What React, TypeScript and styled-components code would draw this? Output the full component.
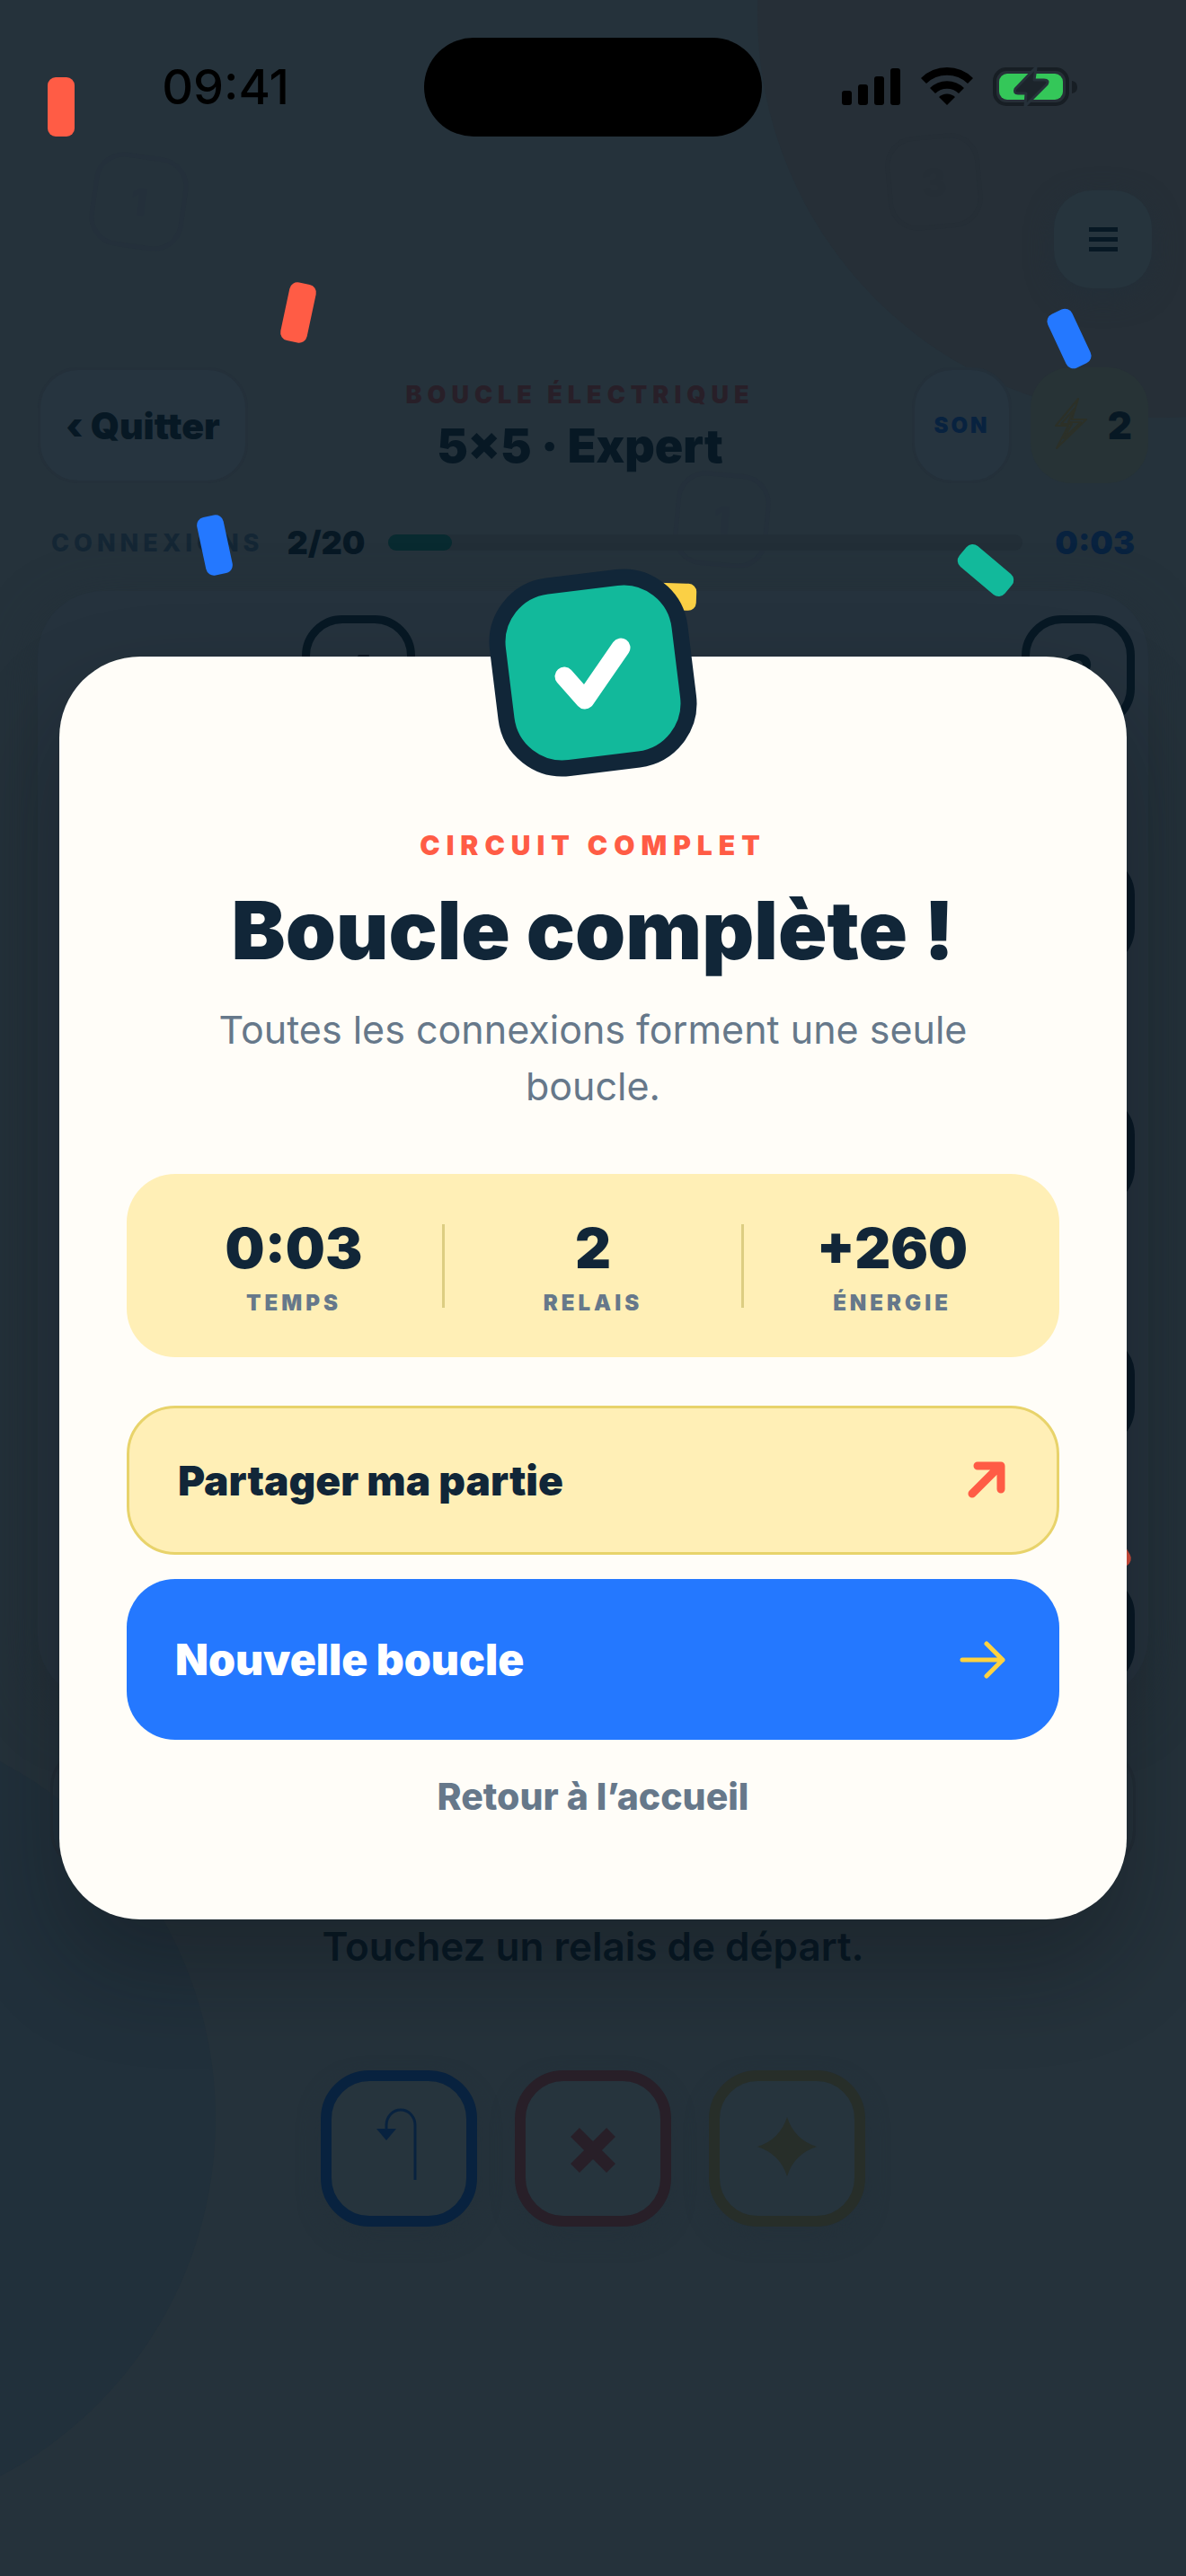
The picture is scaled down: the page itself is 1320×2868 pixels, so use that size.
import React from "react";
import styled, { createGlobalStyle } from "styled-components";

const GlobalStyle = createGlobalStyle`
  *, *::before, *::after { box-sizing: border-box; }
  body { margin: 0; background: #25323b; }
  h1, h2, p, dl, dt, dd { margin: 0; }
  button { font: inherit; border: 0; background: none; padding: 0; cursor: pointer; }
  a { text-decoration: none; }
`;

const Page = styled.div`
  position: relative;
  min-height: 100vh;
  overflow: hidden;
  background: #25323b;
  color: #071824;
  font-family: Inter, "Liberation Sans", sans-serif;
`;

const Glow = styled.div<{ $tone: string }>`
  position: absolute;
  width: 900px;
  height: 900px;
  border-radius: 50%;
  background: ${(p) => p.$tone};
`;
const TopGlow = styled(Glow)`
  top: -435px;
  right: -423px;
`;
const BottomGlow = styled(Glow)`
  bottom: 59px;
  left: -660px;
`;

const GhostTile = styled.div<{ $x: number; $y: number; $turn: number; $tone: string }>`
  position: absolute;
  left: ${(p) => p.$x}px;
  top: ${(p) => p.$y}px;
  width: 105px;
  height: 105px;
  display: grid;
  place-items: center;
  border: 5px solid ${(p) => p.$tone};
  border-radius: 33px;
  color: ${(p) => p.$tone};
  font-size: 42px;
  font-weight: 800;
  transform: rotate(${(p) => p.$turn}deg);
`;

const StatusBar = styled.div`
  position: relative;
  display: grid;
  grid-template-columns: 1fr 376px 1fr;
  align-items: center;
  justify-items: center;
  padding: 42px 30px 0;
  color: #000;
`;
const Clock = styled.span`
  font-size: 54px;
  font-weight: 500;
  line-height: 66px;
`;
const Island = styled.div`
  width: 100%;
  height: 110px;
  border-radius: 55px;
  background: #000;
`;
const StatusIcons = styled.svg`
  width: 264px;
  height: 48px;
`;

const Game = styled.main`
  position: relative;
  display: flex;
  flex-direction: column;
`;
const MenuRow = styled.div`
  display: flex;
  justify-content: flex-end;
  padding: 60px 38px 0;
`;
const MenuButton = styled.button`
  display: grid;
  place-items: center;
  width: 109px;
  height: 109px;
  border-radius: 42px;
  background: #26343d;
  box-shadow: 0 9px 30px #232f39;
`;

const Header = styled.header`
  display: flex;
  align-items: center;
  gap: 21px;
  padding: 88px 42px 0;
`;
const Tile = styled.button<{ $width: number }>`
  width: ${(p) => p.$width}px;
  height: 129px;
  border: 3px solid #24303a;
  border-radius: 45px;
  background: #26343f;
`;
const QuitButton = styled(Tile)`
  color: #071824;
  font-size: 41px;
  font-weight: 900;
`;
const SoundButton = styled(Tile)`
  color: #08223f;
  font-size: 24px;
  font-weight: 900;
  letter-spacing: 3px;
`;
const Energy = styled.div`
  display: flex;
  align-items: center;
  justify-content: space-between;
  width: 131px;
  height: 129px;
  padding: 0 18px 0 24px;
  border-radius: 45px;
  background: #273336;
  font-size: 42px;
  font-weight: 900;
`;
const Heading = styled.div`
  flex: 1;
  margin: 0 -21px;
  padding-top: 3px;
  text-align: center;
`;
const Kicker = styled.p`
  color: #281f28;
  font-size: 27px;
  line-height: 33px;
  font-weight: 900;
  letter-spacing: 6px;
`;
const Level = styled.h1`
  margin-top: 9px;
  font-size: 52px;
  line-height: 63px;
  font-weight: 900;
`;

const Progress = styled.div`
  display: flex;
  align-items: center;
  margin-top: 42px;
  padding: 0 57px;
  height: 48px;
  font-size: 36px;
  font-weight: 900;
`;
const ProgressLabel = styled.span`
  color: #142634;
  font-size: 27px;
  font-weight: 800;
  letter-spacing: 5px;
`;
const ProgressCount = styled.span`
  margin: 0 26px;
`;
const Track = styled.div`
  flex: 1;
  height: 18px;
  border-radius: 9px;
  background: #222e37;
`;
const Fill = styled.div`
  width: 10%;
  height: 100%;
  border-radius: 9px;
  background: #082a30;
`;
const Timer = styled.span`
  margin-left: 36px;
  color: #08223f;
`;

const Board = styled.section`
  display: grid;
  grid-template-columns: repeat(5, 126px);
  grid-auto-rows: 126px;
  justify-content: space-between;
  align-content: space-between;
  margin: 30px 42px 0;
  padding: 27px 15px 15px 27px;
  aspect-ratio: 1;
  border-radius: 72px;
  background: #25323d;
  box-shadow: 0 18px 60px #232f38;
`;
const Relay = styled.div<{ $col: number; $row: number }>`
  grid-column: ${(p) => p.$col};
  grid-row: ${(p) => p.$row};
  display: grid;
  place-items: center;
  border: 9px solid #071824;
  border-radius: 45px;
  font-size: 54px;
  font-weight: 800;
`;
const EmptyCard = styled.div`
  height: 138px;
  margin: 51px 56px 0;
  border: 3px solid #222d36;
  border-radius: 45px;
`;
const Hint = styled.p`
  margin-top: 57px;
  text-align: center;
  font-size: 44px;
  line-height: 54px;
  font-weight: 600;
`;
const Tools = styled.div`
  display: flex;
  justify-content: center;
  gap: 42px;
  margin-top: 111px;
`;
const ToolButton = styled.button<{ $tone: string }>`
  display: grid;
  place-items: center;
  width: 174px;
  height: 174px;
  border: 12px solid ${(p) => p.$tone};
  border-radius: 54px;
  background: #26343d;
  color: ${(p) => p.$tone};
  box-shadow: 0 12px 24px #24313a;
`;

const Overlay = styled.div`
  position: absolute;
  inset: 0;
  display: flex;
  align-items: center;
  padding: 0 66px;
`;
const Confetto = styled.i<{ $x: number; $y: number; $turn: number; $tone: string }>`
  position: absolute;
  left: ${(p) => p.$x}px;
  top: ${(p) => p.$y}px;
  width: 30px;
  height: 66px;
  border-radius: 9px;
  background: ${(p) => p.$tone};
  transform: rotate(${(p) => p.$turn}deg);
`;
const Dialog = styled.section`
  position: relative;
  flex: 1;
  display: flex;
  flex-direction: column;
  padding: 192px 75px 86px;
  border-radius: 90px;
  background: #fffdf8;
  color: #112638;
  text-align: center;
  box-shadow: 0 54px 108px rgba(10, 14, 16, 0.3);
`;
const Badge = styled.div`
  position: absolute;
  top: -93px;
  left: 50%;
  width: 222px;
  height: 222px;
  margin-left: -111px;
  display: grid;
  place-items: center;
  border: 18px solid #112638;
  border-radius: 72px;
  background: #12b99b;
  transform: rotate(-7deg);
`;
const CheckMark = styled.svg`
  transform: rotate(7deg);
`;
const Eyebrow = styled.p`
  color: #ff5c45;
  font-size: 30px;
  line-height: 36px;
  font-weight: 900;
  letter-spacing: 7px;
`;
const Title = styled.h2`
  margin-top: 24px;
  font-size: 90px;
  line-height: 105px;
  font-weight: 900;
`;
const Message = styled.p`
  margin: 27px 84px 0;
  color: #66788a;
  font-size: 43px;
  line-height: 63px;
`;
const Stats = styled.dl`
  display: flex;
  align-items: center;
  margin-top: 66px;
  padding: 45px 21px;
  border-radius: 54px;
  background: #ffefb6;
`;
const Stat = styled.div`
  flex: 1;
  display: flex;
  flex-direction: column-reverse;
`;
const StatLabel = styled.dt`
  margin-top: 9px;
  color: #66788a;
  font-size: 24px;
  line-height: 30px;
  font-weight: 900;
  letter-spacing: 4px;
`;
const StatValue = styled.dd`
  font-size: 62px;
  line-height: 75px;
  font-weight: 900;
`;
const Divider = styled.div`
  width: 3px;
  height: 93px;
  background: #dccd82;
`;
const ActionButton = styled.button`
  display: flex;
  align-items: center;
  justify-content: space-between;
  border-radius: 54px;
  font-weight: 900;
`;
const ShareButton = styled(ActionButton)`
  height: 166px;
  margin-top: 54px;
  padding: 0 57px 0 54px;
  border: 3px solid #e8d36b;
  background: #ffefb6;
  color: #112638;
  font-size: 46px;
`;
const PrimaryButton = styled(ActionButton)`
  height: 179px;
  margin-top: 27px;
  padding: 0 60px 0 54px;
  background: #2478ff;
  color: #fff;
  font-size: 48px;
`;
const HomeLink = styled.a`
  align-self: center;
  margin-top: 12px;
  color: #66788a;
  font-size: 41px;
  line-height: 102px;
  font-weight: 800;
`;

const confetti = [
  { x: 53, y: 86, turn: 0, tone: "#ff5c45" },
  { x: 317, y: 315, turn: 12, tone: "#ff5c45" },
  { x: 1175, y: 344, turn: -25, tone: "#2478ff" },
  { x: 224, y: 574, turn: -12, tone: "#2478ff" },
  { x: 1082, y: 602, turn: -50, tone: "#12b99b" },
  { x: 727, y: 631, turn: 92, tone: "#fbd045" },
  { x: 1211, y: 1709, turn: 60, tone: "#d94f3d" },
];

const relays = [
  { col: 2, row: 1, value: "4" },
  { col: 5, row: 1, value: "2" },
  { col: 5, row: 2, value: "" },
  { col: 5, row: 3, value: "" },
  { col: 5, row: 4, value: "" },
  { col: 5, row: 5, value: "" },
];

const stats = [
  { label: "TEMPS", value: "0:03" },
  { label: "RELAIS", value: "2" },
  { label: "ÉNERGIE", value: "+260" },
];

export default function App() {
  return (
    <Page>
      <GlobalStyle />
      <TopGlow $tone="#262f37" />
      <BottomGlow $tone="#21303b" />
      <GhostTile aria-hidden $x={102} $y={172} $turn={8} $tone="#24303b">1</GhostTile>
      <GhostTile aria-hidden $x={987} $y={150} $turn={-5} $tone="#252e36">3</GhostTile>
      <GhostTile aria-hidden $x={751} $y={526} $turn={5} $tone="#24303b">1</GhostTile>

      <StatusBar>
        <Clock>09:41</Clock>
        <Island />
        <StatusIcons viewBox="0 0 264 48" aria-hidden>
          <g fill="#000">
            <rect x="0" y="28" width="11" height="16" rx="3" />
            <rect x="18" y="21" width="11" height="23" rx="3" />
            <rect x="36" y="12" width="11" height="32" rx="3" />
            <rect x="54" y="3" width="11" height="41" rx="3" />
            <path d="M88 14 A41 41 0 0 1 146 14 L140 20 A33 33 0 0 0 94 20 Z" />
            <path d="M98 25 A27 27 0 0 1 136 25 L130 31 A19 19 0 0 0 104 31 Z" />
            <path d="M108 35 A13 13 0 0 1 126 35 L117 44 Z" />
          </g>
          <rect x="170" y="4" width="81" height="39" rx="13" fill="none" stroke="#171e24" strokeWidth="4" />
          <path d="M256 17 Q262 18 262 24 Q262 30 256 31 Z" fill="#171e24" />
          <rect x="175" y="9" width="71" height="29" rx="9" fill="#34c759" />
          <path
            d="M216 2 L193 26 Q191 31 196 31 L205 31 L204 45 L228 21 Q231 16 225 16 L214 16 Z"
            fill="#1c242b"
            stroke="#26313a"
            strokeWidth="3"
            strokeLinejoin="round"
          />
        </StatusIcons>
      </StatusBar>

      <Game>
        <MenuRow>
          <MenuButton aria-label="Menu">
            <svg width="32" height="28" viewBox="0 0 32 28" fill="#071824">
              <rect width="32" height="5" />
              <rect y="11" width="32" height="5" />
              <rect y="22" width="32" height="5" />
            </svg>
          </MenuButton>
        </MenuRow>

        <Header>
          <QuitButton $width={234}>‹ Quitter</QuitButton>
          <Heading>
            <Kicker>BOUCLE ÉLECTRIQUE</Kicker>
            <Level>5×5 · Expert</Level>
          </Heading>
          <SoundButton $width={111}>SON</SoundButton>
          <Energy>
            <svg width="42" height="66" viewBox="0 0 42 54" fill="none" stroke="#2c3027" strokeWidth="2" strokeLinejoin="round">
              <path d="M29 -3 L4 27 L18 27 L5 52 L38 20 L22 20 Z" />
              <path d="M25 8 L10 25 L22 25 L13 41 L32 23 L18 23 Z" />
            </svg>
            2
          </Energy>
        </Header>

        <Progress>
          <ProgressLabel>CONNEXIONS</ProgressLabel>
          <ProgressCount>2/20</ProgressCount>
          <Track>
            <Fill />
          </Track>
          <Timer>0:03</Timer>
        </Progress>

        <Board aria-label="Plateau">
          {relays.map((r) => (
            <Relay key={`${r.col}-${r.row}`} $col={r.col} $row={r.row}>
              {r.value}
            </Relay>
          ))}
        </Board>
        <EmptyCard />
        <Hint>Touchez un relais de départ.</Hint>

        <Tools>
          <ToolButton $tone="#08223f" aria-label="Annuler">
            <svg width="96" height="96" viewBox="0 0 96 96">
              <path d="M34 29 V22 A16 17 0 0 1 66 22 V83" fill="none" stroke="currentColor" strokeWidth="3" />
              <path d="M23 26 H45 L34 39 Z" fill="currentColor" />
            </svg>
          </ToolButton>
          <ToolButton $tone="#281f28" aria-label="Effacer">
            <svg width="96" height="96" viewBox="0 0 96 96">
              <path d="M28 30 L68 70 M68 30 L28 70" fill="none" stroke="currentColor" strokeWidth="14" />
            </svg>
          </ToolButton>
          <ToolButton $tone="#272e29" aria-label="Indice">
            <svg width="96" height="96" viewBox="0 0 96 96" fill="currentColor">
              <path d="M48 13 Q56 38 81 46 Q56 54 48 79 Q40 54 15 46 Q40 38 48 13 Z" />
            </svg>
          </ToolButton>
        </Tools>
      </Game>

      <Overlay>
        {confetti.map((c) => (
          <Confetto key={`${c.x}-${c.y}`} $x={c.x} $y={c.y} $turn={c.turn} $tone={c.tone} />
        ))}
        <Dialog role="dialog" aria-labelledby="result-title">
          <Badge>
            <CheckMark width="96" height="96" viewBox="0 0 96 96" fill="none" stroke="#fff" strokeWidth="21" strokeLinecap="round" strokeLinejoin="round">
              <path d="M16 52 L39 78 L79 20" />
            </CheckMark>
          </Badge>
          <Eyebrow>CIRCUIT COMPLET</Eyebrow>
          <Title id="result-title">Boucle complète !</Title>
          <Message>Toutes les connexions forment une seule boucle.</Message>
          <Stats>
            {stats.map((s, i) => (
              <React.Fragment key={s.label}>
                {i > 0 && <Divider />}
                <Stat>
                  <StatLabel>{s.label}</StatLabel>
                  <StatValue>{s.value}</StatValue>
                </Stat>
              </React.Fragment>
            ))}
          </Stats>
          <ShareButton>
            Partager ma partie
            <svg width="42" height="42" viewBox="0 0 42 42" fill="none" stroke="#ff5c45" strokeWidth="9" strokeLinecap="round" strokeLinejoin="round">
              <path d="M5 36 L36 5 M11 5 H37 V31" />
            </svg>
          </ShareButton>
          <PrimaryButton>
            Nouvelle boucle
            <svg width="51" height="42" viewBox="0 0 51 42" fill="none" stroke="#ffd23f" strokeWidth="5" strokeLinecap="round" strokeLinejoin="round">
              <path d="M3 21 H48 M30 3 L48 21 L30 39" />
            </svg>
          </PrimaryButton>
          <HomeLink href="#accueil">Retour à l’accueil</HomeLink>
        </Dialog>
      </Overlay>
    </Page>
  );
}
